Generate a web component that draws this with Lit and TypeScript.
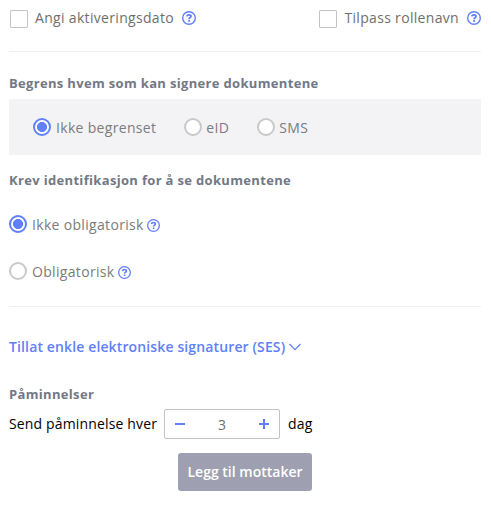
import { LitElement, html, css } from "lit";
import { customElement } from "lit/decorators.js";

const help = (size: number) => html`<svg class="help" width=${size} height=${size} viewBox="0 0 14 14" fill="none" stroke="#6180fa">
  <circle cx="7" cy="7" r="6.3" stroke-width="1.4"></circle>
  <path d="M4.8 5.4C5 4.2 5.8 3.8 7 3.8C8.3 3.8 9 4.4 9 5.3C9 6.6 7.1 6.6 7.1 8.2" stroke-width="1.8"></path>
  <path d="M7.1 9.1V10.8" stroke-width="1.8"></path>
</svg>`;

@customElement("app-root")
export class AppRoot extends LitElement {
  static styles = css`
    :host { display: block; box-sizing: border-box; height: 508px; padding: 0 10px 0 9px; background: #fff; color: #7b7b7b; font: 14px/20px "Open Sans", sans-serif; letter-spacing: .32px; overflow: hidden; }
    * { box-sizing: border-box; }
    svg { display: block; flex: none; }
    .row { display: flex; align-items: center; white-space: nowrap; }
    .checks { height: 36px; justify-content: space-between; color: #6f6f6f; }
    .box { width: 18px; height: 18px; border: 1px solid #c4c4c4; border-radius: 1px; margin: 2px 7px 0 1px; }
    .checks .help { margin-left: 8px; }
    .rule { height: 1px; background: #f0f0f2; }
    h2 { margin: 0; font-size: 13px; line-height: 20px; font-weight: 700; color: #727885; white-space: nowrap; letter-spacing: .33px; }
    .rule.one { margin-top: 15px; }
    .who { margin-top: 21px; }
    .panel { margin-top: 6px; height: 56px; background: #f3f3f5; padding: 1px 0 0 24px; gap: 28px; }
    .radio { width: 18px; height: 18px; border: 2px solid #c9c9c9; border-radius: 50%; margin-right: 5px; background: #fff; flex: none; }
    .panel .radio { margin-top: -1px; }
    .panel .radio:not(.on) { margin-right: 4px; }
    .radio.on { border-color: #6180fa; background: radial-gradient(circle, #6180fa 4.7px, #fff 5.3px); }
    .ident { margin-top: 15px; }
    .option { height: 20px; margin-top: 25px; }
    .option .radio { margin-top: -2px; }
    .option + .option { margin-top: 27px; }
    .option .help { margin-left: 3.5px; }
    .rule.two { margin-top: 24px; }
    .link { margin-top: 30px; color: #6180fa; font-weight: 600; height: 20px; letter-spacing: .13px; }
    .link svg { margin-left: 4px; }
    .remind { margin-top: 27px; }
    .send { margin-top: 5px; height: 30px; color: #000; letter-spacing: .15px; }
    .step { width: 116px; height: 30px; margin: 0 8px 0 7px; border: 1px solid #c4c4c4; border-radius: 2px; justify-content: space-between; padding: 0 9px; color: #6f6f6f; font-weight: 500; }
    .step span { margin-top: 1px; }
    .add { display: block; margin: 14px 0 0 169px; width: 134px; height: 38px; padding: 0; border: 0; border-radius: 3px; background: #9e9fb0; color: #fff; font: 600 14px/20px "Open Sans", sans-serif; white-space: nowrap; }
  `;

  render() {
    return html`
      <div class="row checks">
        <div class="row"><span class="box"></span>Angi aktiveringsdato${help(14)}</div>
        <div class="row"><span class="box"></span>Tilpass rollenavn${help(14)}</div>
      </div>
      <div class="rule one"></div>
      <h2 class="who">Begrens hvem som kan signere dokumentene</h2>
      <div class="row panel">
        <div class="row"><span class="radio on"></span>Ikke begrenset</div>
        <div class="row"><span class="radio"></span>eID</div>
        <div class="row"><span class="radio"></span>SMS</div>
      </div>
      <h2 class="ident">Krev identifikasjon for å se dokumentene</h2>
      <div class="row option"><span class="radio on"></span>Ikke obligatorisk${help(13)}</div>
      <div class="row option"><span class="radio"></span>Obligatorisk${help(13)}</div>
      <div class="rule two"></div>
      <div class="row link">Tillat enkle elektroniske signaturer (SES)<svg width="12" height="8" viewBox="0 0 12 8" fill="none" stroke="#6180fa" stroke-width="1.3"><path d="M.5 1 6 6.6 11.5 1"></path></svg></div>
      <h2 class="remind">Påminnelser</h2>
      <div class="row send">Send påminnelse hver
        <div class="row step">
          <svg width="12" height="12" viewBox="0 0 12 12" stroke="#6180fa" stroke-width="2"><path d="M1 6H11"></path></svg>
          <span>3</span>
          <svg width="12" height="12" viewBox="0 0 12 12" stroke="#6180fa" stroke-width="2"><path d="M1 6H11M6 1V11"></path></svg>
        </div>dag</div>
      <button class="add">Legg til mottaker</button>
    `;
  }
}
